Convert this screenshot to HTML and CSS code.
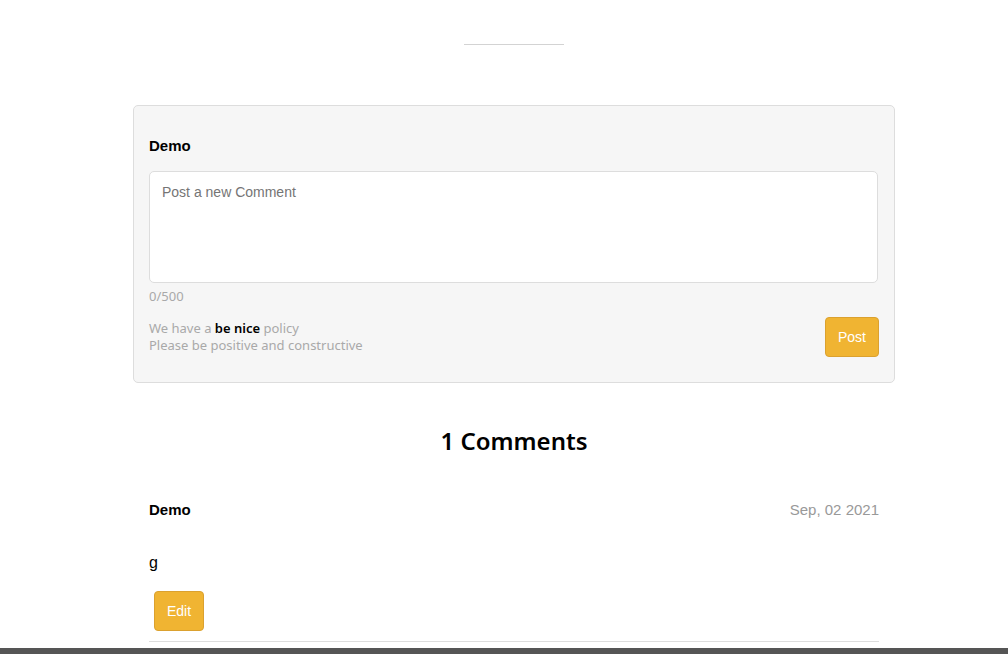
FILE: index.html
```html
<!DOCTYPE html>
<html lang="en">
<head>
<meta charset="utf-8">
<meta name="viewport" content="width=device-width, initial-scale=1">
<title>Comments</title>
<link rel="stylesheet" href="styles.css">
</head>
<body>
<main class="page">
  <div class="content">
    <hr class="divider">
    <form class="composer">
      <label class="author" for="comment">Demo</label>
      <textarea class="composer-input" id="comment" maxlength="500" placeholder="Post a new Comment"></textarea>
      <div class="note">0/500</div>
      <div class="composer-footer">
        <p class="note">We have a <strong class="note-strong">be nice</strong> policy<br>Please be positive and constructive</p>
        <button class="button" type="button">Post</button>
      </div>
    </form>
    <h2 class="title">1 Comments</h2>
    <article class="comment">
      <header class="comment-header">
        <span class="author">Demo</span>
        <time class="date" datetime="2021-09-02">Sep, 02 2021</time>
      </header>
      <p class="comment-text">g</p>
      <div class="comment-actions">
        <button class="button" type="button">Edit</button>
      </div>
    </article>
  </div>
</main>
<footer class="footer"></footer>
</body>
</html>
```
FILE: styles.css
```css
* {
  box-sizing: border-box;
}

body {
  margin: 0;
  min-height: 100vh;
  display: flex;
  flex-direction: column;
  background: #fff;
  color: #000;
  font-family: "Liberation Sans", Arial, sans-serif;
  font-size: 15px;
  line-height: 20px;
}

.page {
  padding: 44px 0 6px 20px;
}

.content {
  max-width: 762px;
  margin: 0 auto;
}

.divider {
  width: 100px;
  height: 1px;
  margin: 0 auto 60px;
  border: 0;
  background: #d3d3d3;
}

.composer {
  padding: 30px 15px 25px;
  border: 1px solid #ddd;
  border-radius: 5px;
  background: #f6f6f6;
}

.author {
  display: block;
  font-weight: bold;
}

.composer-input {
  display: block;
  width: calc(100% - 1px);
  height: 112px;
  margin: 15px 0 5px;
  padding: 10px 12px;
  border: 1px solid #ddd;
  border-radius: 5px;
  background: #fff;
  color: #000;
  font-family: inherit;
  font-size: 14px;
  line-height: 20px;
  resize: none;
}

.composer-input::placeholder {
  color: #757575;
}

.note {
  margin: 0;
  color: #a9a9a9;
  font-family: "Noto Sans", sans-serif;
  font-size: 13px;
  line-height: 17px;
}

.note-strong {
  color: #000;
  font-weight: 600;
}

.composer-footer {
  display: flex;
  justify-content: space-between;
  align-items: center;
  margin-top: 12px;
}

.button {
  height: 40px;
  padding: 0 12px;
  border: 1px solid #dba12f;
  border-radius: 4px;
  background: #f0b432;
  color: #fff;
  font-family: inherit;
  font-size: 14px;
  line-height: 20px;
  cursor: pointer;
}

.title {
  margin: 42px 0 0;
  font-family: "Noto Sans", sans-serif;
  font-size: 24px;
  font-weight: 600;
  line-height: 32px;
  text-align: center;
}

.comment {
  margin: 43px 16px 0;
  padding-bottom: 10px;
  border-bottom: 1px solid #ddd;
}

.comment-header {
  display: flex;
  justify-content: space-between;
}

.date {
  color: #999;
}

.comment-text {
  margin: 33px 0 18px;
  font-size: 16px;
}

.comment-actions {
  padding-left: 5px;
}

.footer {
  flex: 1;
  min-height: 6px;
  background: #555;
}
```
